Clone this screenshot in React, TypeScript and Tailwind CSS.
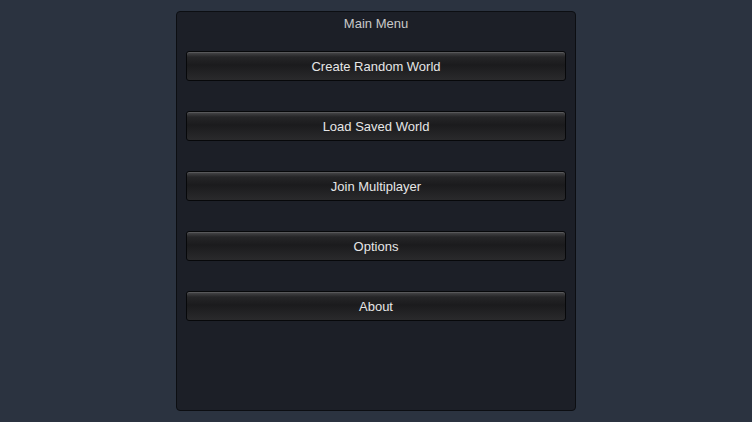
import React from 'react';

const items = ['Create Random World', 'Load Saved World', 'Join Multiplayer', 'Options', 'About'];

function MenuButton({ label }: { label: string }) {
  return (
    <button className="h-[30px] w-full rounded-[3px] border border-[#07080a] bg-[linear-gradient(to_bottom,#4a4a4c_0px,#3a3a3c_2px,#252527_5px,#1b1b1d_13px,#222224_20px,#2a2a2c_28px)] pt-[2px] text-[13px] text-[#e6e6e6] shadow-[inset_0_1px_0_#58585a]">
      {label}
    </button>
  );
}

export default function App() {
  return (
    <div className="flex h-[422px] w-[752px] justify-center bg-[#2b3340] pt-[11px] font-['Liberation_Sans',Arial,sans-serif]">
      <div className="flex h-[400px] w-[400px] flex-col rounded-[4px] border border-[#0c0e12] bg-[#1c1f27] px-[9px]">
        <div className="mt-[4px] h-[16px] text-center text-[13px] leading-[16px] text-[#c9c9c9]">Main Menu</div>
        <div className="mt-[19px] flex flex-col gap-[30px]">
          {items.map((it) => (
            <MenuButton key={it} label={it} />
          ))}
        </div>
      </div>
    </div>
  );
}
